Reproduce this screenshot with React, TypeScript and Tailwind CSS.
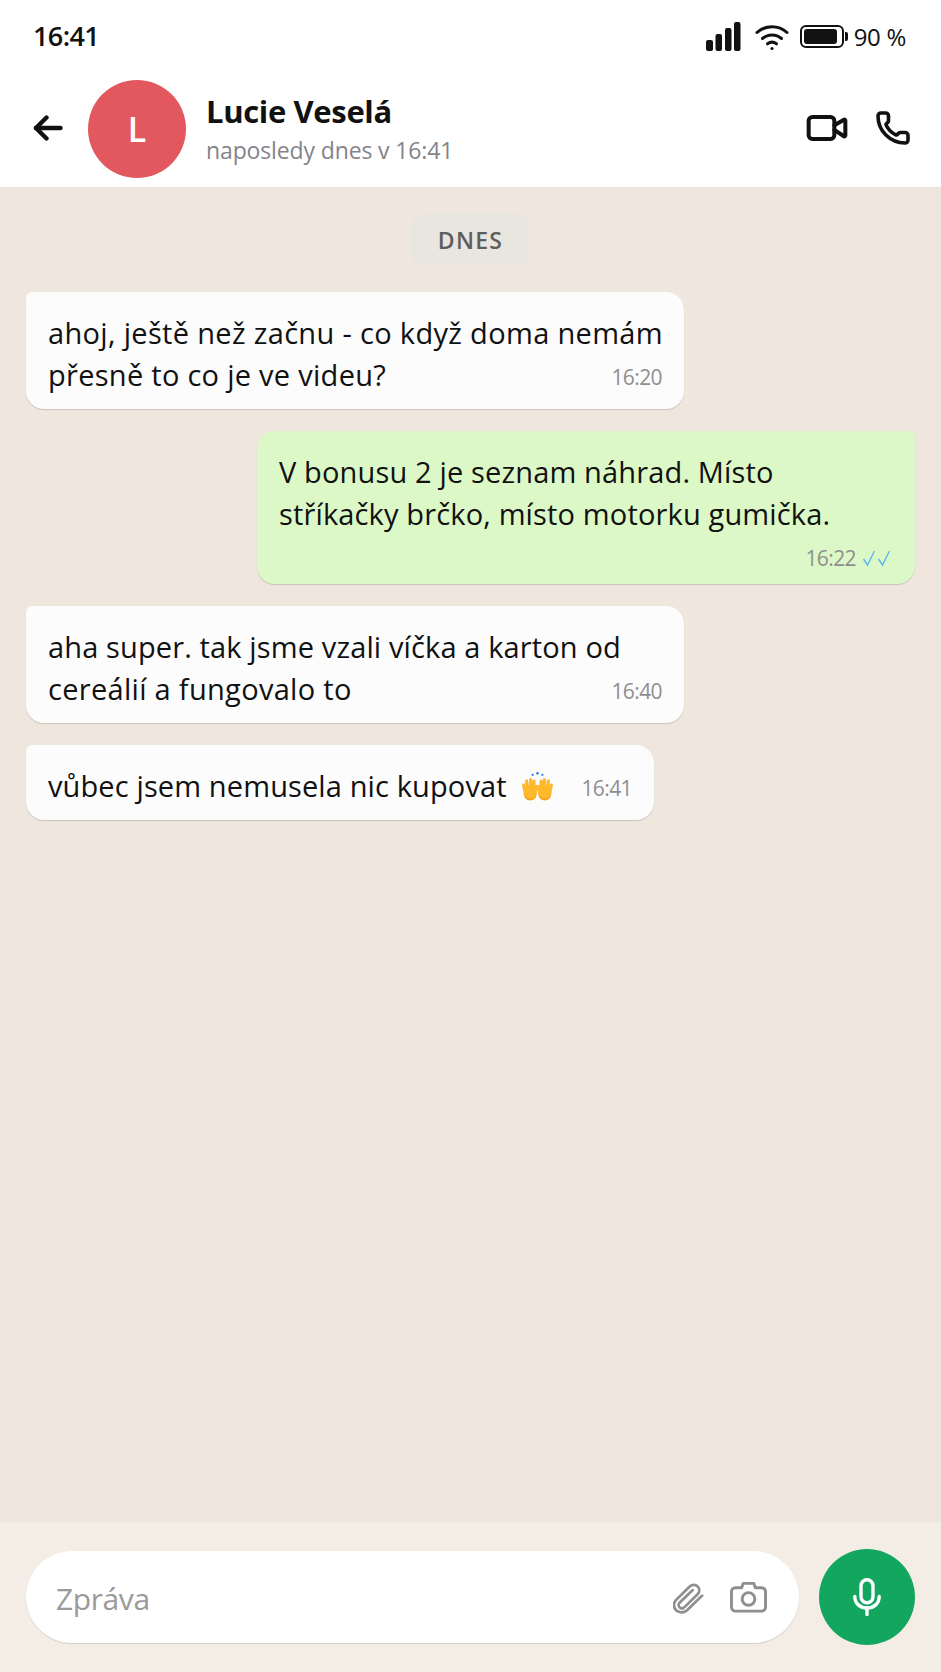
import React from 'react';
import { Phone, Video } from 'lucide-react';

const font = { fontFamily: '"Open Sans", "Noto Sans", sans-serif' };

function SignalIcon() {
  return (
    <svg width="35" height="29" viewBox="0 0 35 29" fill="#111111">
      <rect x="0" y="18" width="7" height="11" rx="2" />
      <rect x="9.500" y="12" width="6.500" height="17" rx="2" />
      <rect x="19" y="6" width="6.500" height="23" rx="2" />
      <rect x="28" y="0" width="6.500" height="29" rx="2" />
    </svg>
  );
}

function WifiIcon() {
  return (
    <svg width="34" height="28" viewBox="0 0 34 28" fill="none" stroke="#111111" strokeWidth="3" strokeLinecap="round">
      <path d="M2 9.500C10.500 1.800 23.500 1.800 32 9.500" />
      <path d="M7.500 15.500C13 10.700 21 10.700 26.500 15.500" />
      <path d="M12.500 20.800C15.200 18.800 18.800 18.800 21.500 20.800" />
      <circle cx="17" cy="25.500" r="1.600" fill="#111111" stroke="none" />
    </svg>
  );
}

function BatteryIcon() {
  return (
    <div className="flex items-center">
      <div className="w-[44px] h-[23px] rounded-[6px] border-2 border-[#111111] p-[2px]">
        <div className="w-[33px] h-full rounded-[3px] bg-[#111111]" />
      </div>
      <div className="w-[3px] h-[9px] rounded-r-[2px] bg-[#111111] ml-[1px]" />
    </div>
  );
}

function BackIcon() {
  return (
    <svg width="30" height="26" viewBox="0 0 30 26" fill="none" stroke="#111111" strokeWidth="4.400" strokeLinecap="round" strokeLinejoin="round">
      <path d="M27.500 13H3" />
      <path d="M13.500 2.500 3 13l10.500 10.500" />
    </svg>
  );
}

function ClipIcon() {
  return (
    <svg width="31" height="33" viewBox="0 0 33 33" fill="none" stroke="#8f8f8f" strokeWidth="2.900" strokeLinecap="round" strokeLinejoin="round">
      <path d="M31 14.500 15 30c-3.200 3-8.600 3-11.700 0-3-3-3-7.800 0-11L17.800 4.800c2.400-2.400 6.200-2.400 8.400-.1 2.300 2.300 2.300 6 0 8.300L12 27c-1.400 1.300-3.600 1.300-5 0-1.300-1.300-1.300-3.500 0-4.900L21 8.600" />
    </svg>
  );
}

function CameraIcon() {
  return (
    <svg width="37" height="32" viewBox="0 0 38 32" fill="none" stroke="#8f8f8f" strokeWidth="3" strokeLinejoin="round">
      <path d="M12 6.500 13.500 2h11L26 6.500h6.500a4 4 0 0 1 4 4V26.500a4 4 0 0 1-4 4h-27a4 4 0 0 1-4-4V10.500a4 4 0 0 1 4-4z" />
      <circle cx="19" cy="18" r="6.500" />
    </svg>
  );
}

function MicIcon() {
  return (
    <svg width="28" height="38" viewBox="0 0 28 38" fill="none" stroke="#ffffff" strokeWidth="3.400" strokeLinecap="round">
      <rect x="8" y="1.700" width="12" height="23" rx="6" />
      <path d="M1.800 18.500C1.800 25.500 7 30 14 30s12.200-4.500 12.200-11.500" />
      <path d="M14 30v6.500" />
    </svg>
  );
}

function RaisingHands() {
  return (
    <svg width="33" height="31" viewBox="0 0 34 31">
      <circle cx="12" cy="3.500" r="1.200" fill="#2f7de1" />
      <circle cx="17" cy="1.800" r="1.300" fill="#2f7de1" />
      <circle cx="22" cy="3.500" r="1.200" fill="#2f7de1" />
      <ellipse cx="9.500" cy="22.500" rx="6.800" ry="7.500" fill="#f7a21b" />
      <ellipse cx="24.500" cy="22.500" rx="6.800" ry="7.500" fill="#f7a21b" />
      <ellipse cx="9.500" cy="21" rx="6.600" ry="6.800" fill="#fdb92b" />
      <ellipse cx="24.500" cy="21" rx="6.600" ry="6.800" fill="#fdb92b" />
      <path d="M4 20 2.700 14M6.800 18 5.800 9.800M10 17.500V8.300M13 18l.4-8M14.700 22l1.300-6.500M30 20l1.300-6M27.200 18l1-8.200M24 17.500V8.300M21 18l-.4-8M19.300 22 18 15.500" fill="none" stroke="#fdb92b" strokeWidth="3.300" strokeLinecap="round" />
    </svg>
  );
}

function Time({ value }: { value: string }) {
  return <span className="text-[21px] leading-[26px] text-[#8f8f8f] tracking-[-0.6px]">{value}</span>;
}

function Line({ text, tracking }: { text: string; tracking: string }) {
  return <div className={`text-[29px] leading-[42px] text-[#111111] whitespace-nowrap ${tracking}`}>{text}</div>;
}

function Incoming({ lines, time, width, emoji }: { lines: [string, string][]; time: string; width: string; emoji?: boolean }) {
  const last = lines[lines.length - 1];
  return (
    <div className={`${width} self-start rounded-[18px] rounded-tl-[6px] bg-[#fcfcfc] shadow-[0_1px_1px_rgba(0,0,0,0.16)] px-[22px] pt-[20px] pb-[13px]`}>
      {lines.slice(0, -1).map(([text, tracking]) => (
        <Line key={text} text={text} tracking={tracking} />
      ))}
      <div className="flex items-center justify-between">
        <div className="flex items-center gap-[14px]">
          <Line text={last[0]} tracking={last[1]} />
          {emoji && <RaisingHands />}
        </div>
        <div className="pt-[4px]">
          <Time value={time} />
        </div>
      </div>
    </div>
  );
}

export default function App() {
  return (
    <div className="w-[941px] h-[1672px] flex flex-col bg-[#efe6de] overflow-hidden" style={font}>
      <div className="bg-white border-b border-[#e8e2dc]">
        <div className="h-[73px] flex items-center justify-between pl-[33px] pr-[35px]">
          <span className="text-[27px] font-semibold text-[#111111] tracking-[-0.6px]">16:41</span>
          <div className="flex items-center">
            <SignalIcon />
            <div className="ml-[14px]"><WifiIcon /></div>
            <div className="ml-[11px]"><BatteryIcon /></div>
            <span className="ml-[6px] text-[24px] text-[#111111] tracking-[-0.3px]">90 %</span>
          </div>
        </div>
        <div className="h-[114px] flex items-start pl-[33px] pr-[30px]">
          <div className="mt-[42px]"><BackIcon /></div>
          <div className="ml-[25px] mt-[7px] w-[98px] h-[98px] rounded-full bg-[#e2585e] flex items-center justify-center text-white text-[34px] font-semibold">L</div>
          <div className="ml-[20px] mt-[17px] flex-1">
            <div className="text-[31px] leading-[42px] font-bold text-[#111111] tracking-[-0.35px]">Lucie Veselá</div>
            <div className="mt-[2px] text-[23px] leading-[32px] text-[#84848a] tracking-[-0.13px]">naposledy dnes v 16:41</div>
          </div>
          <Video className="mt-[33px] w-[44px] h-[44px] text-[#111111]" strokeWidth={2.2} />
          <Phone className="ml-[26px] mt-[37px] w-[36px] h-[36px] text-[#111111]" strokeWidth={2.4} />
        </div>
      </div>

      <div className="flex-1 flex flex-col gap-[22px] px-[26px] pt-[26px]">
        <div className="self-center mb-[5px] pt-[1px] w-[117px] h-[51px] rounded-[10px] bg-[#e9e5df] flex items-center justify-center text-[23px] font-semibold text-[#5e5e5e] tracking-[1.3px]">
          DNES
        </div>
        <Incoming
          width="w-[658px]"
          lines={[
            ['ahoj, ještě než začnu - co když doma nemám', 'tracking-[0.33px]'],
            ['přesně to co je ve videu?', 'tracking-[0.28px]'],
          ]}
          time="16:20"
        />
        <div className="w-[658px] self-end rounded-[18px] rounded-tr-[6px] bg-[#dcf8c6] shadow-[0_1px_1px_rgba(0,0,0,0.16)] px-[22px] pt-[20px] pb-[13px]">
          <Line text="V bonusu 2 je seznam náhrad. Místo" tracking="tracking-[0.15px]" />
          <Line text="stříkačky brčko, místo motorku gumička." tracking="tracking-[0.15px]" />
          <div className="flex items-center justify-end gap-[6px] pt-[10px]">
            <Time value="16:22" />
            <svg width="31" height="20" viewBox="0 0 30 20" fill="none" stroke="#5cb8ee" strokeWidth="1.400">
              <path d="M1 11l4 6 7-14" />
              <path d="M16 11l4 6 7-14" />
            </svg>
          </div>
        </div>
        <Incoming
          width="w-[658px]"
          lines={[
            ['aha super. tak jsme vzali víčka a karton od', 'tracking-[0.13px]'],
            ['cereálií a fungovalo to', 'tracking-[0.3px]'],
          ]}
          time="16:40"
        />
        <Incoming width="w-[628px]" lines={[['vůbec jsem nemusela nic kupovat', 'tracking-[0.12px]']]} time="16:41" emoji />
      </div>

      <div className="h-[150px] bg-[#f3ede6] flex items-center gap-[20px] px-[26px]">
        <div className="flex-1 h-[92px] rounded-full bg-white shadow-[0_1px_1px_rgba(0,0,0,0.12)] flex items-center pl-[30px] pr-[32px]">
          <span className="flex-1 pt-[3px] text-[30px] text-[#9a9a9a] tracking-[-0.4px]">Zpráva</span>
          <ClipIcon />
          <div className="ml-[26px]"><CameraIcon /></div>
        </div>
        <div className="w-[96px] h-[96px] rounded-full bg-[#13a65f] flex items-center justify-center">
          <MicIcon />
        </div>
      </div>
    </div>
  );
}
